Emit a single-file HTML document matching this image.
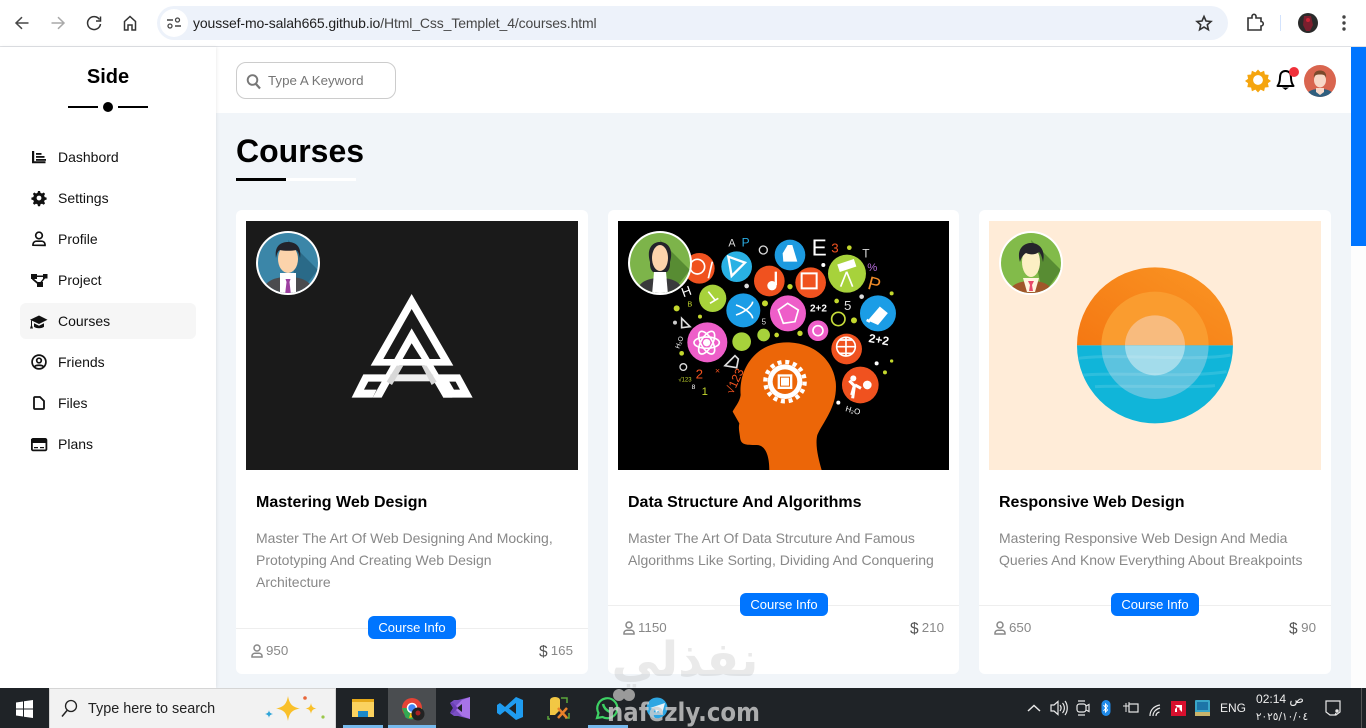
<!DOCTYPE html>
<html lang="en"><head><meta charset="utf-8"><title>Courses</title>
<style>
*{box-sizing:border-box;margin:0;padding:0}
html,body{width:1366px;height:728px;overflow:hidden;background:#f1f5f9;font-family:"Liberation Sans",sans-serif}
.a{position:absolute}
.t{position:absolute;white-space:nowrap}
.nav{position:absolute;left:58px;font-size:14px;color:#111;line-height:16px;white-space:nowrap}
.card{position:absolute;top:210px;height:464px;background:#fff;border-radius:6px}
.ttl{position:absolute;left:20px;top:284px;font-size:16px;font-weight:bold;color:#000;line-height:18px;white-space:nowrap}
.desc{position:absolute;left:20px;top:317px;font-size:14px;line-height:22px;color:#888;white-space:nowrap}
.hr{position:absolute;left:0;right:0;height:1px;background:#eeeeee}
.btn{position:absolute;width:88px;height:23px;background:#0075ff;color:#fff;border-radius:6px;font-size:13px;line-height:23px;text-align:center}
.ft{position:absolute;font-size:13.33px;color:#888;line-height:16px;white-space:nowrap}
</style></head><body>

<!-- browser bar -->
<div class="a" style="left:0;top:0;width:1366px;height:47px;background:#fff;border-bottom:1px solid #dfe1e5"></div>
<div class="a" style="left:157px;top:6px;width:1071px;height:34px;background:#edf2fa;border-radius:17px"></div>
<div class="a" style="left:160px;top:9px;width:28px;height:28px;background:#fff;border-radius:50%"></div>
<div class="t" style="left:193px;top:15px;font-size:14px;line-height:16px;color:#1f1f1f;letter-spacing:-.12px">youssef-mo-salah665.github.io<span style="color:#474747">/Html_Css_Templet_4/courses.html</span></div>

<!-- header -->
<div class="a" style="left:216px;top:47px;width:1135px;height:66px;background:#fff"></div>
<div class="a" style="left:236px;top:62px;width:160px;height:37px;border:1px solid #ccc;border-radius:10px;background:#fff"></div>
<div class="t" style="left:268px;top:73px;font-size:13.33px;line-height:16px;color:#757575">Type A Keyword</div>

<!-- sidebar -->
<div class="a" style="left:0;top:47px;width:216px;height:641px;background:#fff;box-shadow:1px 0 3px rgba(0,0,0,.07)"></div>
<div class="t" style="left:68px;width:80px;text-align:center;top:66px;font-size:20px;font-weight:bold;line-height:23px;color:#000">Side</div>
<div class="a" style="left:20px;top:303px;width:176px;height:36px;background:#f6f6f6;border-radius:6px"></div>
<div class="nav" style="top:149px">Dashbord</div>
<div class="nav" style="top:190px">Settings</div>
<div class="nav" style="top:231px">Profile</div>
<div class="nav" style="top:272px">Project</div>
<div class="nav" style="top:313px">Courses</div>
<div class="nav" style="top:354px">Friends</div>
<div class="nav" style="top:395px">Files</div>
<div class="nav" style="top:436px">Plans</div>

<!-- scrollbar -->
<div class="a" style="left:1351px;top:47px;width:15px;height:641px;background:#fdfdfd"></div>
<div class="a" style="left:1351px;top:47px;width:15px;height:199px;background:#0075ff"></div>

<!-- title -->
<div class="t" style="left:236px;top:133px;font-size:32px;font-weight:bold;line-height:37px;color:#000">Courses</div>
<div class="a" style="left:236px;top:178px;width:120px;height:3px;background:#fff"></div>
<div class="a" style="left:236px;top:178px;width:50px;height:3px;background:#000"></div>

<!-- cards -->
<div class="card" style="left:236px;width:352px">
  <div class="ttl">Mastering Web Design</div>
  <div class="desc">Master The Art Of Web Designing And Mocking,<br>Prototyping And Creating Web Design<br>Architecture</div>
  <div class="hr" style="top:418px"></div>
  <div class="btn" style="left:132px;top:406px">Course Info</div>
  <div class="ft" style="left:30px;top:433px">950</div>
  <div class="ft" style="right:15px;top:433px">165</div>
</div>
<div class="card" style="left:608px;width:351px">
  <div class="ttl">Data Structure And Algorithms</div>
  <div class="desc">Master The Art Of Data Strcuture And Famous<br>Algorithms Like Sorting, Dividing And Conquering</div>
  <div class="hr" style="top:395px"></div>
  <div class="btn" style="left:132px;top:383px">Course Info</div>
  <div class="ft" style="left:30px;top:410px">1150</div>
  <div class="ft" style="right:15px;top:410px">210</div>
</div>
<div class="card" style="left:979px;width:352px">
  <div class="ttl">Responsive Web Design</div>
  <div class="desc">Mastering Responsive Web Design And Media<br>Queries And Know Everything About Breakpoints</div>
  <div class="hr" style="top:395px"></div>
  <div class="btn" style="left:132px;top:383px">Course Info</div>
  <div class="ft" style="left:30px;top:410px">650</div>
  <div class="ft" style="right:15px;top:410px">90</div>
</div>

<!-- arabic watermark -->
<div class="t" dir="rtl" style="left:604px;top:632px;width:162px;height:56px;overflow:hidden;text-align:center;font-family:'DejaVu Sans',sans-serif;font-weight:bold;font-size:48px;line-height:56px;color:#9a9a9a;opacity:.2">نفذلي</div>

<!-- taskbar -->
<div class="a" style="left:0;top:688px;width:1366px;height:40px;background:#1f2327"></div>
<div class="a" style="left:49px;top:688px;width:287px;height:40px;background:#f2f2f2;border:1px solid #d5d5d5;border-bottom:0"></div>
<div class="t" style="left:88px;top:700px;font-size:14.4px;line-height:18px;color:#222">Type here to search</div>
<div class="a" style="left:388px;top:688px;width:48px;height:40px;background:#4a4d50"></div>
<div class="a" style="left:343px;top:725px;width:40px;height:3px;background:#76b9ed"></div>
<div class="a" style="left:388px;top:725px;width:48px;height:3px;background:#76b9ed"></div>
<div class="a" style="left:588px;top:725px;width:40px;height:3px;background:#76b9ed"></div>
<div class="t" style="left:1220px;top:701px;font-size:12px;line-height:14px;color:#eee">ENG</div>
<div class="t" style="left:1240px;width:80px;text-align:center;top:692px;font-size:12px;line-height:14px;color:#eee;font-family:'Liberation Sans','DejaVu Sans',sans-serif">02:14 ص</div>
<div class="t" style="left:1242px;width:80px;text-align:center;top:710px;font-size:10.500px;line-height:14px;color:#eee;font-family:'DejaVu Sans',sans-serif">٢٠٢٥/١٠/٠٤</div>

<svg class="a" style="left:0;top:0" width="1366" height="728" viewBox="0 0 1366 728" xmlns="http://www.w3.org/2000/svg">
<defs>
<linearGradient id="o1" x1="0" y1="1" x2=".6" y2="0"><stop offset="0" stop-color="#f26a0a"/><stop offset="1" stop-color="#f98f20"/></linearGradient>
<clipPath id="top3"><rect x="0" y="0" width="1035" height="391"/></clipPath>
<clipPath id="bot3"><rect x="0" y="391" width="1035" height="400"/></clipPath>
<clipPath id="av1"><circle cx="288" cy="263" r="30"/></clipPath>
<clipPath id="av2"><circle cx="660" cy="263" r="30"/></clipPath>
<clipPath id="av3"><circle cx="1031" cy="263" r="30"/></clipPath>
<clipPath id="av4"><circle cx="1320" cy="81" r="16"/></clipPath>
</defs>

<!-- browser icons -->
<g fill="none" stroke="#474747" stroke-width="1.500">
<path d="M28.500 23H16.500M22 17.200L16 23L22 28.800"/>
<path d="M51.500 23H63.500M58 17.200L64 23L58 28.800" stroke="#a9a9a9"/>
<path d="M99.500 19.500A6.500 6.500 0 1 0 100.500 24" stroke="#333"/>
<path d="M100.500 16.500V21H96" stroke="#333"/>
<path d="M124.500 21.500L130 16.500L135.500 21.500V30H132V25H128V30H124.500Z" stroke="#333"/>
<path d="M167 20H173M175 26H181" stroke-width="1.400"/>
<circle cx="177.500" cy="20" r="2" stroke-width="1.300"/><circle cx="170" cy="26" r="2" stroke-width="1.300"/>
<path d="M1204 16.500L1206 21L1211 21.500L1207.300 24.800L1208.400 29.700L1204 27.100L1199.600 29.700L1200.700 24.800L1197 21.500L1202 21Z" stroke="#333" stroke-width="1.600"/>
<path d="M1248 18H1252V16.300A2 2 0 0 1 1256 16.300V18H1261V21.500A2.200 2.200 0 0 1 1261 26V30H1248Z" stroke="#333" stroke-width="1.600"/>
</g>
<rect x="1280" y="15" width="1" height="16" fill="#d3e3fd"/>
<circle cx="1308" cy="23" r="10" fill="#2a2a2a"/><path d="M1304 16h7l2 9-3 6h-4l-3-6z" fill="#7a1f2e"/><circle cx="1308" cy="20" r="2" fill="#c23"/>
<circle cx="1344" cy="17" r="1.700" fill="#444"/><circle cx="1344" cy="23" r="1.700" fill="#444"/><circle cx="1344" cy="29" r="1.700" fill="#444"/>

<!-- side decor -->
<rect x="68" y="106" width="30" height="2" fill="#000"/><rect x="118" y="106" width="30" height="2" fill="#000"/><circle cx="108" cy="107" r="5" fill="#000"/>

<!-- nav icons -->
<g fill="#111">
<path d="M32 151h2.200v10.300H45.500v2H32z"/><rect x="36" y="153" width="5.500" height="1.800"/><rect x="36" y="156" width="8.500" height="1.800"/><rect x="36" y="159" width="10" height="1.800"/>
<path fill-rule="evenodd" d="M38 191h2l.5 1.900 1.500.6 1.700-1 1.400 1.400-1 1.700.6 1.500 1.900.5v2l-1.900.5-.6 1.500 1 1.700-1.400 1.400-1.700-1-1.500.6-.5 1.900h-2l-.5-1.900-1.500-.6-1.700 1-1.400-1.400 1-1.700-.6-1.500-1.900-.5v-2l1.900-.5.6-1.500-1-1.700 1.400-1.400 1.700 1 1.500-.6zM39 195.600a2.400 2.400 0 1 0 .01 0z"/>
<rect x="31" y="274" width="6" height="5"/><rect x="43" y="274" width="4.500" height="4.500"/><rect x="37" y="282" width="6" height="5"/>
<path d="M36 275.500h8v1.500h-8zM33 278l7 6-1 1.500-7-6z"/><path d="M44 277.500l1 1-4 5-1-1z"/>
<path d="M30 319.800L39 315.500L47.500 319.800L39 324Z"/><path d="M34 323.300L39 325.800L44 323.300V326.800C42 328.800 36 328.800 34 326.800Z"/><path d="M31 320.500h1v5l1 3h-3l1-3z"/>
</g>
<g fill="none" stroke="#111" stroke-width="1.700">
<circle cx="39" cy="235.500" r="3.300"/><path d="M33 245.200v-1a3.500 3.500 0 0 1 3.500-3h5a3.500 3.500 0 0 1 3.500 3v1.200z"/>
<circle cx="39" cy="362" r="6.900"/><circle cx="39" cy="360.500" r="2.300"/><path d="M34.500 367c1-2.300 8-2.300 9 0"/>
<path d="M35 397h5l4 4v7a1 1 0 0 1-1 1h-8a1 1 0 0 1-1-1v-10a1 1 0 0 1 1-1z" stroke-width="1.800" stroke-linejoin="round"/>
</g>
<rect x="31.900" y="438.900" width="14.500" height="11.500" rx="1.200" fill="none" stroke="#111" stroke-width="1.800"/><rect x="31" y="439" width="16" height="4" fill="#111"/><rect x="34" y="447" width="4" height="1.200" fill="#111"/><rect x="40" y="447" width="4" height="1.200" fill="#111"/>

<!-- search icon -->
<circle cx="252.500" cy="80" r="4.800" fill="none" stroke="#777" stroke-width="1.900"/><path d="M256 84l4 4.500" stroke="#777" stroke-width="2.200"/>

<!-- sun -->
<g fill="#f5a50f"><path d="M1258 69.500l2.600 2.900 3.500-1.600.8 3.700 3.800.4-.8 3.800 3.100 2.300-3.100 2.300.8 3.800-3.800.4-.8 3.700-3.500-1.600-2.600 2.900-2.600-2.900-3.500 1.600-.8-3.700-3.800-.4.8-3.800-3.100-2.300 3.100-2.300-.8-3.800 3.800-.4.8-3.700 3.500 1.600z"/></g>
<circle cx="1258" cy="80" r="5" fill="#fff"/><circle cx="1258" cy="80" r="5.500" fill="none" stroke="#f5a50f" stroke-width="1"/>
<!-- bell -->
<path d="M1285.500 71c-4 0-5.500 3-5.500 6.500 0 4.500-1 6.500-2.500 8.500h16c-1.500-2-2.500-4-2.500-8.500 0-3.500-1.500-6.500-5.500-6.500z" fill="#fff" stroke="#000" stroke-width="2" stroke-linejoin="round"/>
<path d="M1282 87.500h7l-3.500 2.500z" fill="#000"/>
<circle cx="1294" cy="72" r="5" fill="#f0303a"/>
<!-- header avatar -->
<circle cx="1320" cy="81" r="16" fill="#d9654f"/>
<g clip-path="url(#av4)"><path d="M1306 97c1-7 8-8 14-8s13 1 14 8z" fill="#2f5e7e"/><path d="M1316 88h8v4l-4 3-4-3z" fill="#f8d8c8"/><ellipse cx="1320" cy="80" rx="6" ry="7.500" fill="#f8d8c8"/><path d="M1314 78c-1-6 3-7.500 6-7.500s7 1.500 6 7.500c-1-3-2-3.500-6-3.500s-5 .5-6 3.500z" fill="#7b4a2c"/></g>

<!-- card 1 image -->
<rect x="246" y="221" width="332" height="249" fill="#1a1a1a"/>
<g transform="translate(240 215) scale(.3333)">
<path fill="#fff" fill-rule="evenodd" d="M515 237L640 452H392ZM515 282L430 432H602Z"/>
<path fill="#fff" d="M515 340L637 548H610L515 385L425 548H398Z"/>
<path fill="#fff" d="M370 478H450L440 500H385L372 524H410L398 548H335Z"/>
<path fill="#fff" fill-rule="evenodd" d="M580 478H660L698 548H610ZM628 500L642 524H660L647 500Z"/>
<rect x="450" y="478" width="130" height="21" fill="#eee"/>
<path d="M515 385L545 432H488Z" fill="#1a1a1a"/>
<path d="M470 452L440 500L456 510L490 452Z" fill="#d8d8d8"/><path d="M560 452L590 500L575 510L545 452Z" fill="#d8d8d8"/>
</g>
<circle cx="288" cy="263" r="32" fill="#fff"/><circle cx="288" cy="263" r="30" fill="#3b86a8"/>
<g clip-path="url(#av1)"><path d="M288 240l30 30-20 25z" fill="#2a6a88"/><path d="M262 295c1-14 12-18 26-18s25 4 26 18z" fill="#4b4b4e"/><path d="M280 273h16v22h-16z" fill="#fff"/><path d="M285.500 279h5l-1 3 1.500 13h-6l1.500-13z" fill="#9c3fa0"/><ellipse cx="288" cy="259" rx="10" ry="14" fill="#fcd3ab"/><path d="M276 258c-2-13 6-16 12-16s14 3 12 16c-1-5-2-7-4-8-4 1-12 1-16 0-2 1-3 3-4 8z" fill="#23232b"/></g>

<!-- card 2 image -->
<rect x="618" y="221" width="331" height="249" fill="#000"/>
<g transform="translate(610 215) scale(.3333)">
<circle cx="268" cy="160" r="46" fill="#f0521f"/><circle cx="380" cy="155" r="46" fill="#29b1e4"/><circle cx="540" cy="120" r="46" fill="#1c9ae0"/><circle cx="478" cy="198" r="46" fill="#f0521f"/><circle cx="602" cy="203" r="46" fill="#f0521f"/><circle cx="711" cy="176" r="57" fill="#a7d23b"/><circle cx="308" cy="250" r="41" fill="#a7d23b"/><circle cx="400" cy="286" r="51" fill="#1b9de6"/><circle cx="534" cy="295" r="54" fill="#ee5ec9"/><circle cx="624" cy="347" r="31" fill="#ee5ec9"/><circle cx="804" cy="295" r="54" fill="#1b9de6"/><circle cx="292" cy="382" r="60" fill="#ee5ec9"/><circle cx="395" cy="380" r="28" fill="#a7d23b"/><circle cx="461" cy="360" r="19" fill="#a7d23b"/><circle cx="710" cy="402" r="46" fill="#f0521f"/><circle cx="751" cy="510" r="55" fill="#f0521f"/>
<path d="M478 765C478 720 465 690 440 690C405 690 392 690 390 665C388 650 385 640 388 625L368 590C372 580 390 560 392 540C385 460 440 382 530 382C620 382 678 445 678 515C678 580 640 620 622 660C615 690 625 730 635 765Z" fill="#ec6608"/>
<circle cx="525" cy="500" r="52" fill="#fff"/><g stroke="#fff" stroke-width="13" stroke-dasharray="12 11.200" fill="none"><circle cx="525" cy="500" r="59"/></g><circle cx="525" cy="500" r="37" fill="#ec6608"/><rect x="503" y="478" width="44" height="44" fill="#fff"/><rect x="510" y="485" width="30" height="30" fill="#ec6608"/><rect x="513" y="488" width="24" height="24" fill="#fff"/>
<g fill="#fff"><circle cx="486" cy="212" r="14"/><rect x="494" y="170" width="7" height="40"/><path d="M518 115l15-25h14l15 50h-42z"/><path d="M575 175h45v45h-45z" fill="none" stroke="#fff" stroke-width="6"/><path d="M355 125l50 18-40 40z" fill="none" stroke="#fff" stroke-width="7"/><path d="M685 150l45-15 6 18-45 15zM710 170l-18 45M710 170l18 45" stroke="#fff" stroke-width="5"/><path d="M780 315l30-35 18 15-25 30zM780 320l-10-5" stroke="#fff" stroke-width="8"/></g>
<g fill="none" stroke="#fff" stroke-width="5"><circle cx="262" cy="155" r="22"/><path d="M295 190l12-50"/><path d="M378 270c30 10 50 30 50 40M378 300c30-10 50-30 50-40"/><path d="M505 285l28-20 32 20-10 35-35 5z"/><ellipse cx="290" cy="383" rx="38" ry="17"/><ellipse cx="290" cy="383" rx="38" ry="17" transform="rotate(60 290 383)"/><ellipse cx="290" cy="383" rx="38" ry="17" transform="rotate(120 290 383)"/><circle cx="624" cy="347" r="15"/><circle cx="708" cy="395" r="28"/><path d="M680 395h56M708 367v56M690 375h36M690 415h36"/><circle cx="685" cy="312" r="20" stroke="#c7dc3a"/><path d="M300 265l25-15M295 230l20 25"/><path d="M725 540l8-28-15-15M735 510l18 10M733 515l-5 35" stroke-width="9"/></g>
<circle cx="772" cy="510" r="13" fill="#fff"/><circle cx="730" cy="490" r="9" fill="#fff"/>
<circle cx="290" cy="383" r="11" fill="#fff"/>
<g font-family="Liberation Sans,sans-serif" fill="#fff"><text x="605" y="122" font-size="68">E</text><text x="664" y="112" font-size="40" fill="#f0521f">3</text><text x="757" y="128" font-size="36" fill="#ddd">T</text><text x="772" y="168" font-size="34" fill="#b46cd8">%</text><text x="775" y="225" font-size="56" fill="#f28c28" transform="rotate(15 790 205)">P</text><text x="355" y="95" font-size="32" fill="#ddd">A</text><text x="395" y="95" font-size="36" fill="#29abe2">P</text><text x="215" y="243" font-size="40" transform="rotate(-20 230 230)">H</text><text x="232" y="275" font-size="22" fill="#c4d82e">B</text><text x="600" y="290" font-size="30" font-weight="bold">2+2</text><text x="702" y="285" font-size="40" fill="#ddd">5</text><text x="775" y="385" font-size="36" font-weight="bold" transform="rotate(10 800 380)">2+2</text><text x="257" y="490" font-size="40" fill="#f0521f">2</text><text x="275" y="540" font-size="34" fill="#c4d82e">1</text><text x="245" y="522" font-size="20">8</text><text x="315" y="475" font-size="26" fill="#f0521f">×</text><text x="340" y="545" font-size="36" fill="#f0521f" transform="rotate(-65 350 520)">√123</text><text x="205" y="500" font-size="18" fill="#c4d82e">√123</text><text x="185" y="390" font-size="20" transform="rotate(-70 205 380)">H₂O</text><text x="705" y="592" font-size="24" transform="rotate(15 720 590)">H₂O</text><text x="455" y="328" font-size="24" fill="#ddd">5</text></g>
<path d="M345 452l30-30 10 10-5 26z" fill="none" stroke="#ddd" stroke-width="5"/><path d="M215 310l25 25-25 3z" fill="none" stroke="#ddd" stroke-width="5"/>
<circle cx="220" cy="456" r="10" fill="none" stroke="#ddd" stroke-width="4"/><circle cx="680" cy="258" r="7" fill="#c4d82e"/><circle cx="732" cy="316" r="9" fill="#c4d82e"/><circle cx="215" cy="415" r="7" fill="#c4d82e"/><circle cx="465" cy="265" r="9" fill="#c4d82e"/><circle cx="570" cy="355" r="8" fill="#c4d82e"/><circle cx="540" cy="215" r="8" fill="#c4d82e"/><circle cx="500" cy="360" r="7" fill="#c4d82e"/><circle cx="200" cy="280" r="9" fill="#c4d82e"/><circle cx="755" cy="245" r="7" fill="#ddd"/><circle cx="460" cy="105" r="12" fill="none" stroke="#ddd" stroke-width="4"/><circle cx="640" cy="150" r="6" fill="#fff"/><circle cx="718" cy="98" r="7" fill="#c4d82e"/><circle cx="845" cy="235" r="6" fill="#c4d82e"/><circle cx="800" cy="445" r="6" fill="#fff"/><circle cx="845" cy="438" r="5" fill="#c4d82e"/><circle cx="825" cy="472" r="6" fill="#c4d82e"/><circle cx="685" cy="563" r="6" fill="#fff"/><circle cx="410" cy="213" r="7" fill="#ddd"/><circle cx="270" cy="305" r="6" fill="#c4d82e"/><circle cx="195" cy="323" r="6" fill="#ccc"/>
</g>
<circle cx="660" cy="263" r="32" fill="#fff"/><circle cx="660" cy="263" r="30" fill="#7db44a"/>
<g clip-path="url(#av2)"><path d="M660 240l30 30-20 25z" fill="#588c33"/><path d="M650 262c-4-14 3-20 10-20s14 6 10 20c0 4 0 7-3 10h-14c-3-3-3-6-3-10z" fill="#23232b"/><ellipse cx="660" cy="258" rx="8" ry="13" fill="#fcd3ab"/><path d="M636 295c1-12 10-17 24-17s23 5 24 17z" fill="#3a3a3c"/><path d="M654 272h12l2 23h-16z" fill="#fff"/></g>

<!-- card 3 image -->
<rect x="989" y="221" width="332" height="249" fill="#ffecd8"/>
<g transform="translate(980 215) scale(.3333)">
<g clip-path="url(#top3)"><circle cx="525" cy="391" r="234" fill="url(#o1)"/><circle cx="525" cy="391" r="161" fill="#fa9c2f"/><circle cx="525" cy="391" r="90" fill="#f8bb7e"/></g>
<g clip-path="url(#bot3)"><circle cx="525" cy="391" r="234" fill="#10b5d9"/><circle cx="525" cy="391" r="161" fill="#5cc3df"/><circle cx="525" cy="391" r="90" fill="#a3dceb"/></g>
<path d="M296 430C400 415 650 440 752 420M310 480C420 470 620 490 740 470M345 515C420 510 640 520 705 512" fill="none" stroke="#fff" stroke-opacity=".12" stroke-width="9"/>
</g>
<circle cx="1031" cy="263" r="32" fill="#fff"/><circle cx="1031" cy="263" r="30" fill="#82bb4a"/>
<g clip-path="url(#av3)"><path d="M1031 240l30 30-18 25z" fill="#588c33"/><path d="M1008 295c2-10 10-14 23-14s21 4 23 14z" fill="#a0562a"/><path d="M1023 278h16l-4 14h-8z" fill="#fff5e0"/><path d="M1028 281h6l-2 4 1 6h-4l1-6z" fill="#e84a6a"/><ellipse cx="1031" cy="262" rx="9" ry="15" fill="#fcefc4"/><path d="M1020 262c-4-13 4-19 11-19s15 5 12 19c-1-5-2-8-4-10-4 3-9 3-13 1-3 2-5 5-6 9z" fill="#25252b"/></g>

<!-- card footer icons -->
<g fill="none" stroke="#888" stroke-width="1.500">
<circle cx="257" cy="648" r="3"/><path d="M252 657v-1.300a3 3 0 0 1 3-2.500h4a3 3 0 0 1 3 2.500v1.300z"/>
<circle cx="629" cy="625" r="3"/><path d="M624 634v-1.300a3 3 0 0 1 3-2.500h4a3 3 0 0 1 3 2.500v1.300z"/>
<circle cx="1000" cy="625" r="3"/><path d="M995 634v-1.300a3 3 0 0 1 3-2.500h4a3 3 0 0 1 3 2.500v1.300z"/>
</g>
<g font-family="Liberation Sans,sans-serif" font-size="15.500" fill="#555"><text x="539" y="656.500">$</text><text x="910" y="633.500">$</text><text x="1289" y="633.500">$</text></g>

<!-- taskbar icons -->
<g fill="#fff"><path d="M16 702.500l7-1v7h-7zM24 701.300l9-1.300v8.500h-9zM16 709.500h7v7l-7-1zM24 709.500h9v8.500l-9-1.300z"/></g>
<circle cx="71" cy="706" r="5.500" fill="none" stroke="#222" stroke-width="1.300"/><path d="M67 710.500l-5 6" stroke="#222" stroke-width="1.500"/>
<path d="M288 696c1.500 8 4 11 12 12.500-8 1.500-10.500 4-12 12.500-1.500-8.500-4-11-12-12.500 8-1.500 10.500-4.500 12-12.500z" fill="#f9c02a"/>
<path d="M311 703c.5 3.500 2 5 5.500 5.500-3.500.5-5 2-5.500 5.500-.5-3.500-2-5-5.500-5.500 3.500-.5 5-2 5.500-5.500z" fill="#f9c02a"/>
<path d="M269 710c.3 2.500 1.500 3.500 4 4-2.500.5-3.700 1.500-4 4-.3-2.500-1.500-3.500-4-4 2.500-.5 3.700-1.500 4-4z" fill="#2ea4d8"/>
<circle cx="305" cy="698" r="1.800" fill="#e8663a"/><circle cx="323" cy="717" r="1.600" fill="#9ac74a"/>
<!-- explorer -->
<rect x="352" y="699" width="22" height="6" fill="#e6a91a"/><rect x="352" y="702" width="22" height="15" fill="#fbd25f"/><rect x="358" y="711" width="10" height="6" fill="#1b88c8"/>
<!-- chrome -->
<circle cx="412" cy="708" r="10" fill="#e54335"/><path d="M412 708l8.500 5a10 10 0 0 1-15 4.500L402 708z" fill="#34a853"/><path d="M412 708h10a10 10 0 0 1-4 8l-9 2z" fill="#fbbc05"/><circle cx="412" cy="708" r="4.500" fill="#4285f4" stroke="#fff" stroke-width="1.500"/><circle cx="418" cy="714" r="6.500" fill="#222"/><circle cx="418" cy="713" r="2.500" fill="#a22"/>
<!-- VS -->
<path d="M450 703l4-3 4 0 12-3v22l-12-3-4 0-4-3 3-5z" fill="#7a4fc4"/><path d="M470 697l-8 3-8 8 8 8 8 3z" fill="#a873e8"/><path d="M457 708l5-4v8z" fill="#1f2327"/><path d="M450 703l3 0 5 5-5 5-3 0 3-5z" fill="#6a3fb4"/>
<!-- VSCode -->
<path d="M516 697l7 3v17l-7 3-11-9-5 4-3-2v-8l3-2 5 4zM516 703l-7 5.500 7 5.500z" fill="#1f9cf0"/>
<!-- SQL -->
<path d="M550 700a5 3 0 0 1 10 0v10l-5 5h-5z" fill="#f2c744"/><path d="M561 698h6v5M550 719h-2v-3M569 713v5h-4" fill="none" stroke="#5ca83b" stroke-width="1.500"/><path d="M558 718l9-10M558 708l9 10" stroke="#e8812a" stroke-width="2.500"/>
<!-- whatsapp -->
<path d="M597 718l1.500-5a10 10 0 1 1 4 4z" fill="none" stroke="#3dd164" stroke-width="2.200"/><path d="M603 704c1 4 3 6 7 8" stroke="#3dd164" stroke-width="2.500" fill="none"/>
<!-- telegram -->
<circle cx="657" cy="708" r="10.500" fill="#2ea6e2"/><path d="M650 708l15-5-3 11-4-3-2 2-1-4z" fill="#e9f5fb"/>
<!-- nafezly watermark -->
<text x="607" y="721" font-family="DejaVu Sans,sans-serif" font-weight="bold" font-size="26" fill="#cfcfcf" opacity=".8" textLength="153" lengthAdjust="spacingAndGlyphs">nafezly.com</text>
<circle cx="619" cy="695" r="6" fill="#9a9a9a"/><circle cx="629" cy="695" r="6" fill="#9a9a9a"/>
<!-- tray -->
<g fill="none" stroke="#e8e8e8" stroke-width="1.200">
<path d="M1028 711l6-5.500 6 5.500" stroke-width="1.500"/>
<path d="M1051 705h3l4-3.500v13l-4-3.500h-3zM1060 705c1.500 2 1.500 4 0 6M1062.500 703c2.500 3 2.500 7 0 10M1065 701c3 4 3 10 0 14"/>
<rect x="1077" y="704" width="9" height="8" rx="2.500"/><path d="M1086 706l3-1.500v7l-3-1.500M1078 701h7M1078 715h7"/>
<path d="M1123 706h3v-3M1126 703v3h3M1126 706v6M1129 702v10" stroke-width="1"/><rect x="1129" y="704" width="9" height="8"/>
<path d="M1150 716c0-6 4-10 10-11M1153 716c0-4 3-7 7-8M1156 716c0-2 1.500-3.500 3.500-4"/>
<path d="M1326 701h14v11l-4 3h-3l-3 0-4-3z"/><path d="M1336 713l-1 2"/>
</g>
<rect x="1101.500" y="700" width="9" height="16" rx="4.500" fill="#1f8ae8"/><path d="M1103.500 705l4 5-2 2v-8l2 2-4 5" stroke="#fff" stroke-width="1" fill="none"/>
<rect x="1171" y="701" width="15" height="15" fill="#d8102e"/><path d="M1175 705h7v7l-2.500-2.500v-2h-2zM1175 712v-3l2-2v5z" fill="#fff"/>
<rect x="1195" y="700" width="15" height="16" rx="1" fill="#3aa7c8"/><rect x="1197" y="702" width="11" height="8" fill="#1d76a8"/><rect x="1195" y="712" width="15" height="4" fill="#c9b46a"/>
<rect x="1361" y="688" width="1" height="40" fill="#555"/>
<circle cx="1337" cy="711" r="1.700" fill="#e8e8e8"/>
</svg>
</body></html>
